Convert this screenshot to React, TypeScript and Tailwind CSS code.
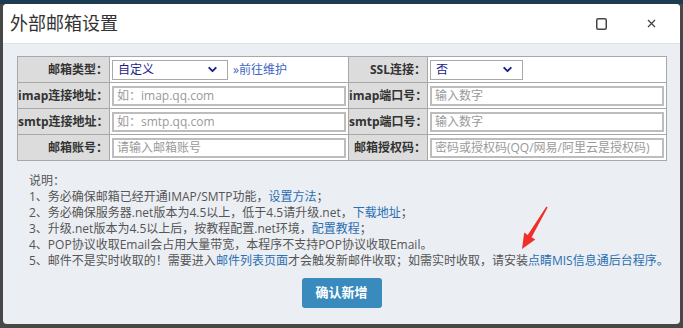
import { ChevronDown } from "lucide-react";

const font = { fontFamily: '"Open Sans", "Noto Sans CJK SC", sans-serif' };

function Label({ children }: { children: React.ReactNode }) {
  return (
    <td className="border border-[#a8a8a8] bg-[#dcdcdc] pr-[1px] text-right text-[12px] font-bold text-[#333] whitespace-nowrap">
      {children}
    </td>
  );
}

function Field({ placeholder }: { placeholder: string }) {
  return (
    <td className="border border-[#a8a8a8] bg-white px-[2px]">
      <input
        className="block h-[20px] w-full border-2 border-[#bdbdbd] px-[3px] text-[12px] text-[#333] outline-none placeholder:text-[#9a9a9a] [text-spacing-trim:space-all]"
        placeholder={placeholder}
      />
    </td>
  );
}

function Select({ value, width }: { value: string; width: string }) {
  return (
    <div className={`flex h-[20px] items-center justify-between border border-[#a9a9a9] bg-white pl-[5px] pr-[8px] text-[12px] text-[#1c1c8c] ${width}`}>
      <span>{value}</span>
      <ChevronDown size={13} strokeWidth={3.5} className="text-[#1c1c8c]" />
    </div>
  );
}

export default function App() {
  return (
    <div style={font} className="relative h-[328px] w-[683px] overflow-hidden border-t-4 border-[#1d3c4f] bg-[#474747] px-[3px] [text-spacing-trim:space-all]">
      <div className="h-[320px] overflow-hidden rounded-[4px] bg-[#ebeef3]">
        {/* header */}
        <div className="flex h-[40px] items-center justify-between border-b border-[#dfe3e8] bg-white pl-[7px] pr-[24px]">
          <span className="text-[18px] text-[#333]">外部邮箱设置</span>
          <div className="flex items-center gap-[40px]">
            <svg width="11" height="12" viewBox="0 0 11 12">
              <rect x="0.75" y="0.75" width="9.5" height="10.5" rx="1.5" fill="none" stroke="#444" strokeWidth="1.5" />
            </svg>
            <svg width="9" height="9" viewBox="0 0 9 9">
              <path d="M1 1L8 8M8 1L1 8" stroke="#444" strokeWidth="1.3" />
            </svg>
          </div>
        </div>

        {/* body */}
        <div className="px-[14px] pt-[12px]">
          <table className="w-[649px] table-fixed border-collapse">
            <colgroup>
              <col className="w-[92px]" />
              <col className="w-[239px]" />
              <col className="w-[79px]" />
              <col className="w-[239px]" />
            </colgroup>
            <tbody>
              <tr className="h-[26px]">
                <Label>邮箱类型：</Label>
                <td className="border border-[#a8a8a8] bg-white px-[2px]">
                  <div className="flex items-center gap-[5px]">
                    <Select value="自定义" width="w-[116px]" />
                    <a className="text-[12px] text-[#3e66c2]">»前往维护</a>
                  </div>
                </td>
                <Label>SSL连接：</Label>
                <td className="border border-[#a8a8a8] bg-white px-[2px]">
                  <Select value="否" width="w-[93px]" />
                </td>
              </tr>
              <tr className="h-[26px]">
                <Label>imap连接地址：</Label>
                <Field placeholder="如：imap.qq.com" />
                <Label>imap端口号：</Label>
                <Field placeholder="输入数字" />
              </tr>
              <tr className="h-[26px]">
                <Label>smtp连接地址：</Label>
                <Field placeholder="如：smtp.qq.com" />
                <Label>smtp端口号：</Label>
                <Field placeholder="输入数字" />
              </tr>
              <tr className="h-[26px]">
                <Label>邮箱账号：</Label>
                <Field placeholder="请输入邮箱账号" />
                <Label>邮箱授权码：</Label>
                <Field placeholder="密码或授权码(QQ/网易/阿里云是授权码)" />
              </tr>
            </tbody>
          </table>

          <div className="mt-[12px] whitespace-nowrap pl-[12px] text-[12px] leading-[16px] text-[#555]">
            <p>说明：</p>
            <p>
              1、务必确保邮箱已经开通IMAP/SMTP功能，<a className="text-[#2a6fb2]">设置方法</a>；
            </p>
            <p>
              2、务必确保服务器.net版本为4.5以上，低于4.5请升级.net，<a className="text-[#2a6fb2]">下载地址</a>；
            </p>
            <p>
              3、升级.net版本为4.5以上后，按教程配置.net环境，<a className="text-[#2a6fb2]">配置教程</a>；
            </p>
            <p>4、POP协议收取Email会占用大量带宽，本程序不支持POP协议收取Email。</p>
            <p>
              5、邮件不是实时收取的！需要进入<a className="text-[#2a6fb2]">邮件列表页面</a>才会触发新邮件收取；如需实时收取，请安装<a className="text-[#2a6fb2]">点睛MIS信息通后台程序。</a>
            </p>
          </div>

          <div className="mt-[9px] flex justify-center">
            <button className="h-[30px] w-[80px] rounded-[3px] bg-[#3a8bbd] text-[13px] font-bold text-white">
              确认新增
            </button>
          </div>
        </div>
      </div>

      {/* red annotation arrow */}
      <svg className="absolute left-[518px] top-[200px]" width="34" height="50" viewBox="0 0 34 50">
        <polygon
          points="29.6,3.4 13.6,33.3 17.3,35.6 4,45 6.2,28.6 9.7,30.9 28.4,2.6"
          fill="#f03028"
        />
      </svg>
    </div>
  );
}
